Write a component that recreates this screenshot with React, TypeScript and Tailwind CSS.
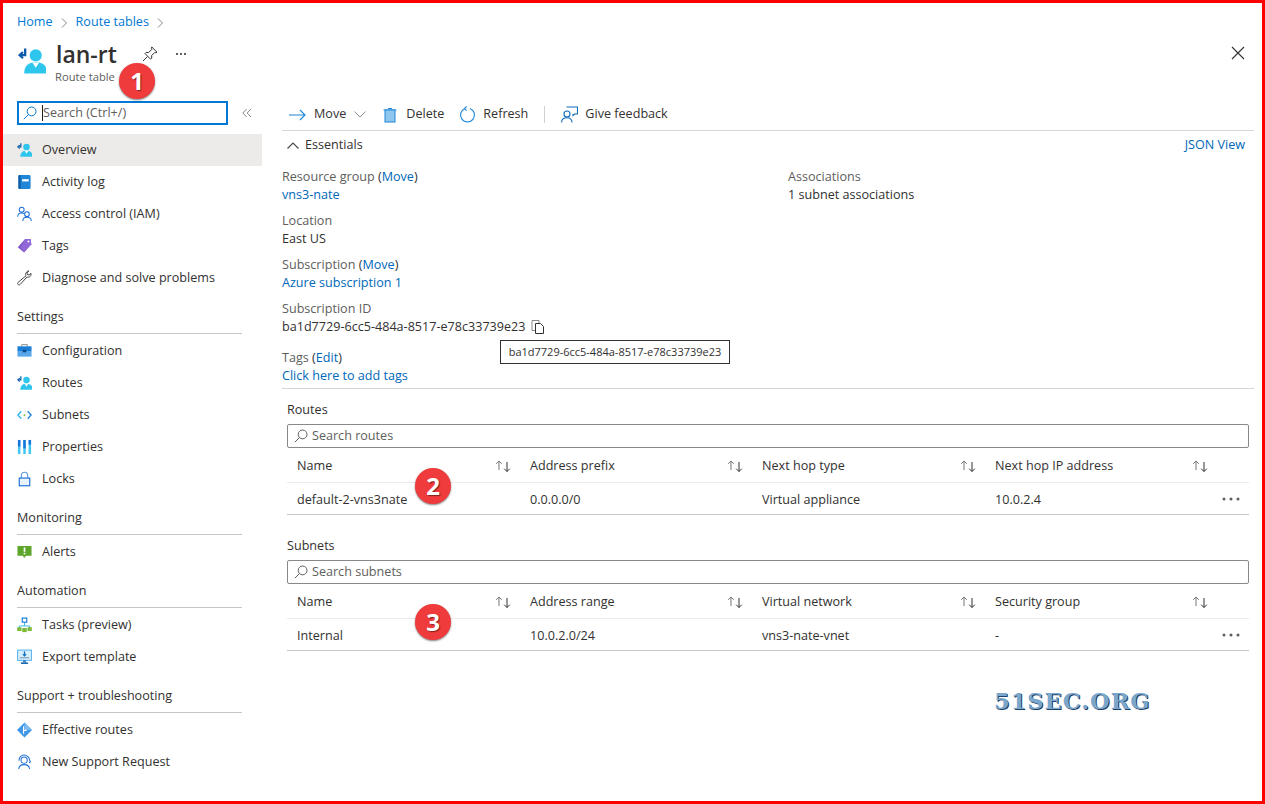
import type { ReactNode } from 'react';

type NavItem = { label: string; icon: ReactNode; active?: boolean };

function RouteIcon({ size = 16 }: { size?: number }) {
  return (
    <svg width={size} height={size} viewBox="0 0 18 18">
      <path d="M4.6 1v4.2H1.4" fill="none" stroke="#0b5cab" strokeWidth="1.5" />
      <path d="M3.2 3.2 1 5.2l2.2 2" fill="none" stroke="#0b5cab" strokeWidth="1.4" />
      <circle cx="11.4" cy="5.4" r="3.9" fill="#2fc6ee" />
      <path d="M4 17c0-5 2.6-7.2 7.4-7.2s7.400 2.200 7.400 7.200z" fill="#2fc6ee" />
      <path d="M9.2 10l2.200 3.400 2.200-3.400z" fill="#ffffff" />
    </svg>
  );
}

function ActivityIcon() {
  return (
    <svg width="16" height="16" viewBox="0 0 16 16">
      <rect x="1.5" y="0.5" width="13" height="15" rx="1.5" fill="#1f86d8" />
      <rect x="1.5" y="0.5" width="2.5" height="15" rx="1" fill="#0f5ea8" />
      <rect x="5.5" y="5" width="7" height="2.4" fill="#ffffff" />
    </svg>
  );
}

function IamIcon() {
  return (
    <svg width="16" height="16" viewBox="0 0 16 16" fill="none" stroke="#1f6fd6" strokeWidth="1.1">
      <circle cx="5" cy="3.4" r="2.6" />
      <path d="M.8 11c0-2.600 1.600-4 4.200-4 1 0 1.800.2 2.400.6" />
      <circle cx="10.6" cy="8.2" r="2.5" />
      <path d="M6.200 15.400c0-2.600 1.600-4 4.400-4s4.600 1.400 4.600 4" />
    </svg>
  );
}

function TagIcon() {
  return (
    <svg width="16" height="16" viewBox="0 0 16 16">
      <path d="M8.600.6 14.600.4l.6 5.600-7.600 9L.8 9.400z" fill="#7e57c9" />
      <path d="M8.600.6 14.600.4l.6 5.600-7 8-4.400-4z" fill="#9268d8" />
      <circle cx="12.2" cy="3.2" r="1.1" fill="#ffffff" />
    </svg>
  );
}

function WrenchIcon() {
  return (
    <svg width="16" height="16" viewBox="0 0 16 16" fill="none" stroke="#3b3a39" strokeWidth="1">
      <path d="M11.200.8 9.600 2.600c-.6 1-.5 2.200 0 3L1.200 12.600c-.8.8-.6 1.800 0 2.300.7.6 1.500.5 2.100 0l7.400-8c1.100.4 2.500.2 3.400-.7.8-.9 1.100-2 .8-3.200l-2 1.800-1.900-.6-.3-1.900 2-1.800c-.5-.1-1-.1-1.500.3z" />
    </svg>
  );
}

function ConfigIcon() {
  return (
    <svg width="16" height="16" viewBox="0 0 16 16">
      <path d="M5 3V1.200h6V3" fill="none" stroke="#8a8886" strokeWidth="1" />
      <rect x="0.5" y="3" width="15" height="5" fill="#1b7ed6" />
      <rect x="0.5" y="8" width="15" height="6" fill="#57a8ea" />
      <rect x="6" y="6.8" width="4" height="2.6" fill="#0b4a8a" />
    </svg>
  );
}

function SubnetIcon() {
  return (
    <svg width="16" height="16" viewBox="0 0 16 16" fill="none">
      <path d="M4.600 4 1 8l3.600 4" stroke="#35b8f2" strokeWidth="1.5" />
      <path d="M11.400 4 15 8l-3.600 4" stroke="#1e88e0" strokeWidth="1.5" />
      <circle cx="8" cy="8" r="1.2" fill="#8ecb5a" />
    </svg>
  );
}

function PropertiesIcon() {
  return (
    <svg width="16" height="16" viewBox="0 0 16 16">
      <rect x="1" y="0.5" width="2.6" height="15" fill="#3fc8f4" />
      <rect x="1" y="0.5" width="2.6" height="7" fill="#1a73d9" />
      <rect x="6.7" y="0.5" width="2.6" height="15" fill="#3fc8f4" />
      <rect x="6.7" y="0.5" width="2.6" height="9" fill="#1a73d9" />
      <rect x="12.4" y="0.5" width="2.6" height="15" fill="#3fc8f4" />
      <rect x="12.4" y="0.5" width="2.6" height="5" fill="#1a73d9" />
    </svg>
  );
}

function LockIcon() {
  return (
    <svg width="16" height="16" viewBox="0 0 16 16" fill="none">
      <path d="M4.600 7V4.200C4.600 2.200 6 .8 8 .8s3.400 1.400 3.400 3.400V7" stroke="#5b9ae0" strokeWidth="1.2" />
      <rect x="2.4" y="7" width="11.2" height="8.2" fill="#e8f3fc" stroke="#1a6bd6" strokeWidth="1.2" />
    </svg>
  );
}

function AlertIcon() {
  return (
    <svg width="16" height="16" viewBox="0 0 16 16">
      <path d="M0.500 1.500h15v10.500H9.600L7.600 14.400 6.400 12H.5z" fill="#5ea52c" />
      <rect x="7.1" y="3.2" width="1.8" height="4.6" fill="#ffffff" />
      <rect x="7.1" y="8.8" width="1.8" height="1.7" fill="#ffffff" />
    </svg>
  );
}

function TasksIcon() {
  return (
    <svg width="16" height="16" viewBox="0 0 16 16">
      <path d="M8 5v4M2.400 11.600V9h11.200v2.600" fill="none" stroke="#35b8f2" strokeWidth="1" />
      <rect x="5.6" y="0.6" width="4.8" height="4.4" fill="#ffffff" stroke="#0f78d4" strokeWidth="1.2" />
      <rect x="0.2" y="10.4" width="4.6" height="4" fill="#7fba38" />
      <rect x="5.6" y="11.2" width="4.8" height="4.4" fill="#7fba38" />
      <rect x="11.2" y="10.4" width="4.6" height="4" fill="#7fba38" />
    </svg>
  );
}

function ExportIcon() {
  return (
    <svg width="16" height="16" viewBox="0 0 16 16">
      <rect x="0.6" y="0.6" width="14.8" height="11" fill="#d7eefc" stroke="#5bb4ee" strokeWidth="1.1" />
      <rect x="3" y="8.2" width="10" height="1.2" fill="#7a9cba" />
      <path d="M8 2v4" stroke="#0f6cbd" strokeWidth="1.4" />
      <path d="M5.600 5 8 7.600 10.400 5z" fill="#0f6cbd" />
      <path d="M6.400 11.600h3.200v2.200H6.400z" fill="#2f7fc4" />
      <path d="M4.200 13.800h7.600v1.600H4.200z" fill="#0f5ea8" />
    </svg>
  );
}

function EffectiveIcon() {
  return (
    <svg width="16" height="16" viewBox="0 0 16 16">
      <path d="M8 0 16 8l-8 8-8-8z" fill="#3f97e6" />
      <path d="M8 0 16 8 8 8z" fill="#7cbcf3" />
      <path d="M7 4v8M7 8.400h3.400" fill="none" stroke="#ffffff" strokeWidth="1.2" />
    </svg>
  );
}

function SupportIcon() {
  return (
    <svg width="16" height="16" viewBox="0 0 16 16" fill="none" stroke="#1f6fd6" strokeWidth="1.1">
      <circle cx="7.6" cy="6" r="3.3" />
      <path d="M2.200 6.600C2 3 4.400.6 7.600.6s5.800 2.400 5.800 5.600M13.400 6.200l1 1.600-1.600 1" />
      <path d="M1.800 15.400c.2-2.800 2.400-4.600 5.800-4.600s5.600 1.800 5.800 4.600" />
    </svg>
  );
}

function SearchGlyph({ color = '#605e5c' }: { color?: string }) {
  return (
    <svg width="14" height="14" viewBox="0 0 14 14" fill="none" stroke={color} strokeWidth="1">
      <circle cx="8.600" cy="5.400" r="4.400" />
      <path d="M5.400 8.600.8 13.200" />
    </svg>
  );
}

function SortArrows() {
  return (
    <svg width="18" height="12" viewBox="0 0 18 12" fill="none" strokeWidth="1">
      <path d="M5 10V1M2.200 3.800 5 1l2.800 2.800" stroke="#797775" />
      <path d="M13 2v9.500M10.200 8.700 13 11.500l2.800-2.800" stroke="#323130" />
    </svg>
  );
}

function Dots() {
  return (
    <svg width="18" height="4" viewBox="0 0 18 4" fill="#605e5c">
      <circle cx="2" cy="2" r="1.5" />
      <circle cx="9" cy="2" r="1.5" />
      <circle cx="16" cy="2" r="1.5" />
    </svg>
  );
}

const topItems: NavItem[] = [
  { label: 'Overview', icon: <RouteIcon />, active: true },
  { label: 'Activity log', icon: <ActivityIcon /> },
  { label: 'Access control (IAM)', icon: <IamIcon /> },
  { label: 'Tags', icon: <TagIcon /> },
  { label: 'Diagnose and solve problems', icon: <WrenchIcon /> },
];

const groups: { title: string; items: NavItem[] }[] = [
  {
    title: 'Settings',
    items: [
      { label: 'Configuration', icon: <ConfigIcon /> },
      { label: 'Routes', icon: <RouteIcon /> },
      { label: 'Subnets', icon: <SubnetIcon /> },
      { label: 'Properties', icon: <PropertiesIcon /> },
      { label: 'Locks', icon: <LockIcon /> },
    ],
  },
  { title: 'Monitoring', items: [{ label: 'Alerts', icon: <AlertIcon /> }] },
  {
    title: 'Automation',
    items: [
      { label: 'Tasks (preview)', icon: <TasksIcon /> },
      { label: 'Export template', icon: <ExportIcon /> },
    ],
  },
  {
    title: 'Support + troubleshooting',
    items: [
      { label: 'Effective routes', icon: <EffectiveIcon /> },
      { label: 'New Support Request', icon: <SupportIcon /> },
    ],
  },
];

function NavRow({ item }: { item: NavItem }) {
  return (
    <div className={`flex h-8 items-center gap-[10px] pl-[14px] ${item.active ? 'bg-[#edebe9]' : ''}`}>
      <span className="flex w-[15px] justify-center">{item.icon}</span>
      <span>{item.label}</span>
    </div>
  );
}

function Sidebar() {
  return (
    <aside className="w-[259px] shrink-0">
      <div className="mt-[2px] flex h-[24px] items-center pl-[14px]">
        <div className="flex h-[24px] w-[211px] items-center gap-[5px] border-2 border-[#0078d4] pl-[4px]">
          <SearchGlyph color="#0078d4" />
          <span className="border-l border-[#201f1e] leading-[16px] text-[#605e5c]">Search (Ctrl+/)</span>
        </div>
        <svg className="ml-[14px]" width="10" height="10" viewBox="0 0 10 10" fill="none" stroke="#8a8886" strokeWidth="1">
          <path d="M4.600 1 .8 5l3.800 4M9 1 5.200 5 9 9" />
        </svg>
      </div>
      <div className="mt-[9px]">
        {topItems.map((item) => (
          <NavRow key={item.label} item={item} />
        ))}
      </div>
      {groups.map((group) => (
        <div key={group.title}>
          <div className="mb-px ml-[14px] w-[225px] border-b border-[#c8c6c4] pt-[14px] pb-[7px] leading-[18px]">
            {group.title}
          </div>
          {group.items.map((item) => (
            <NavRow key={item.label} item={item} />
          ))}
        </div>
      ))}
    </aside>
  );
}

function Field({ label, action, children }: { label: string; action?: string; children: ReactNode }) {
  return (
    <div className="leading-[18px]">
      <div className="text-[#605e5c]">
        {label}
        {action && (
          <span className="text-[#323130]">
            {' ('}
            <span className="text-[#0067b8]">{action}</span>
            {')'}
          </span>
        )}
      </div>
      <div>{children}</div>
    </div>
  );
}

function DataTable({
  title,
  placeholder,
  headers,
  row,
}: {
  title: string;
  placeholder: string;
  headers: string[];
  row: string[];
}) {
  return (
    <section className="ml-[5px] w-[962px]">
      <div className="h-[18px] leading-[18px]">{title}</div>
      <div className="mt-[5px] flex h-[24px] items-center gap-[4px] rounded-[2px] border border-[#8a8886] pl-[6px] text-[#605e5c]">
        <SearchGlyph />
        {placeholder}
      </div>
      <div className="grid h-[35px] grid-cols-[233px_232px_233px_232px_22px] items-center border-b border-[#edebe9] pt-[2px] pl-[10px]">
        {headers.map((h) => (
          <div key={h} className="flex items-center justify-between pr-[18px]">
            <span>{h}</span>
            <SortArrows />
          </div>
        ))}
      </div>
      <div className="grid h-[32px] grid-cols-[233px_232px_233px_232px_22px] items-center border-b border-[#c8c6c4] pt-[4px] pl-[10px]">
        {row.map((c, i) => (
          <div key={i}>{c}</div>
        ))}
        <div className="-mt-[4px] -ml-[5px]">
          <Dots />
        </div>
      </div>
    </section>
  );
}

function Badge({ n, className }: { n: number; className: string }) {
  return (
    <div
      className={`absolute flex h-9 w-9 items-center justify-center rounded-full bg-[#ef3b3b] text-[24px] font-bold text-white shadow-[0_1px_2px_rgba(0,0,0,0.5)] [text-shadow:1px_1px_1px_rgba(0,0,0,0.45)] ${className}`}
    >
      {n}
    </div>
  );
}

export default function App() {
  return (
    <div className="relative h-[804px] w-[1265px] overflow-hidden border-[3px] border-[#ff0000] bg-white font-['Open_Sans',sans-serif] text-[12.6px] text-[#323130]">
      <div className="flex h-[36px] items-center gap-[8px] pt-[3px] pl-[14px] text-[#0078d4]">
        <span>Home</span>
        <svg width="7" height="10" viewBox="0 0 7 10" fill="none" stroke="#8a8886"><path d="M1 .5 5.500 5 1 9.500" /></svg>
        <span>Route tables</span>
        <svg width="7" height="10" viewBox="0 0 7 10" fill="none" stroke="#8a8886"><path d="M1 .5 5.500 5 1 9.500" /></svg>
      </div>
      <div className="flex h-[60px] items-start pl-[15px]">
        <div className="mt-[8px] w-[38px]">
          <RouteIcon size={28} />
        </div>
        <div>
          <div className="text-[23px] leading-[30px] font-semibold">lan-rt</div>
          <div className="-ml-px text-[11.2px] leading-[16px] text-[#605e5c]">Route table</div>
        </div>
        <svg className="mt-[7px] ml-[25px]" width="16" height="16" viewBox="0 0 16 16" fill="none" stroke="#323130" strokeWidth="1">
          <path d="M9.800 1 15 6.200l-1.200.6-1-.4-3.200 3.200.2 2.400-1.200 1.200L3 7.600 4.200 6.400l2.400.2 3.200-3.200-.4-1zM5.500 10.500 1 15" />
        </svg>
        <div className="mt-[14px] ml-[18px] flex gap-[2px]">
          <span className="h-[2px] w-[2px] bg-[#605e5c]" />
          <span className="h-[2px] w-[2px] bg-[#605e5c]" />
          <span className="h-[2px] w-[2px] bg-[#605e5c]" />
        </div>
        <svg className="mt-[7px] mr-[17px] ml-auto" width="14" height="14" viewBox="0 0 14 14" stroke="#323130" strokeWidth="1.1">
          <path d="M1 1l12 12M13 1 1 13" />
        </svg>
      </div>
      <div className="flex">
        <Sidebar />
        <main className="ml-[20px] w-[972px]">
          <div className="flex h-[32px] items-center border-b border-[#d6d6d6] pl-[7px]">
            <svg width="17" height="12" viewBox="0 0 17 12" fill="none" stroke="#1f86d8" strokeWidth="1.1"><path d="M0 6h16M11 1l5 5-5 5" /></svg>
            <span className="ml-[8px]">Move</span>
            <svg className="ml-[8px]" width="12" height="7" viewBox="0 0 12 7" fill="none" stroke="#8a8886"><path d="M.5.5 6 6 11.500.5" /></svg>
            <svg className="ml-[17px]" width="14" height="16" viewBox="0 0 14 16">
              <path d="M5 1.500h4M.5 3h13" stroke="#1f86d8" fill="none" />
              <rect x="2" y="3" width="10" height="12" fill="#8ec6f0" stroke="#1f86d8" />
            </svg>
            <span className="ml-[9px]">Delete</span>
            <svg className="ml-[15px]" width="17" height="17" viewBox="0 0 17 17" fill="none" stroke="#1f86d8" strokeWidth="1.1">
              <path d="M6 2.400a7 7 0 1 0 5 0M7.600.5 5.400 2.500l2.200 2.200" />
            </svg>
            <span className="ml-[7px]">Refresh</span>
            <span className="ml-[16px] h-[17px] w-px bg-[#d2d0ce]" />
            <svg className="ml-[16px]" width="17" height="17" viewBox="0 0 17 17" fill="none" stroke="#0f6cbd" strokeWidth="1.1">
              <path d="M5.500 1h11v7h-3l-1.500 1.500V8" />
              <circle cx="6" cy="8" r="3" />
              <path d="M.6 16.500c0-3 2-4.700 5.400-4.700s5 1.700 5 4.700" />
            </svg>
            <span className="ml-[7px]">Give feedback</span>
          </div>
          <div className="flex h-[29px] items-center pl-[5px]">
            <svg width="12" height="7" viewBox="0 0 12 7" fill="none" stroke="#484644" strokeWidth="1.1"><path d="M.5 6.500 6 1l5.500 5.500" /></svg>
            <span className="ml-[6px]">Essentials</span>
            <span className="mr-[9px] ml-auto text-[#0067b8]">JSON View</span>
          </div>
          <div className="flex border-b border-[#d6d6d6] pt-[8px] pb-[3px]">
            <div className="flex w-[506px] flex-col gap-[8px]">
              <Field label="Resource group" action="Move">
                <span className="text-[#0067b8]">vns3-nate</span>
              </Field>
              <Field label="Location">East US</Field>
              <Field label="Subscription" action="Move">
                <span className="text-[#0067b8]">Azure subscription 1</span>
              </Field>
              <Field label="Subscription ID">
                <span className="flex items-center gap-[6px]">
                  ba1d7729-6cc5-484a-8517-e78c33739e23
                  <svg width="14" height="14" viewBox="0 0 14 14" fill="#ffffff" stroke="#323130" strokeWidth="1">
                    <path d="M1 .5h7v10H1z" stroke="#8a8886" />
                    <path d="M4.500 3.500h5l3 3v7h-8z" />
                  </svg>
                </span>
              </Field>
              <div className="mt-[5px]">
                <Field label="Tags" action="Edit">
                  <span className="text-[#0067b8]">Click here to add tags</span>
                </Field>
              </div>
            </div>
            <div>
              <Field label="Associations">1 subnet associations</Field>
            </div>
          </div>
          <div className="mt-[12px]">
            <DataTable
              title="Routes"
              placeholder="Search routes"
              headers={['Name', 'Address prefix', 'Next hop type', 'Next hop IP address']}
              row={['default-2-vns3nate', '0.0.0.0/0', 'Virtual appliance', '10.0.2.4']}
            />
          </div>
          <div className="mt-[22px]">
            <DataTable
              title="Subnets"
              placeholder="Search subnets"
              headers={['Name', 'Address range', 'Virtual network', 'Security group']}
              row={['Internal', '10.0.2.0/24', 'vns3-nate-vnet', '-']}
            />
          </div>
        </main>
      </div>
      <div className="absolute top-[337px] left-[497px] flex h-[24px] w-[230px] items-center justify-center border border-[#323130] bg-white text-[11px]">
        ba1d7729-6cc5-484a-8517-e78c33739e23
      </div>
      <Badge n={1} className="top-[60px] left-[116px]" />
      <Badge n={2} className="top-[465px] left-[412px]" />
      <Badge n={3} className="top-[601px] left-[412px]" />
      <div className="absolute top-[682px] left-[991px] font-['DejaVu_Serif',serif] text-[22.500px] font-bold tracking-[1px] text-[#7ba7cc] [text-shadow:1px_1px_0_#1f3f66]">
        51SEC.ORG
      </div>
    </div>
  );
}
